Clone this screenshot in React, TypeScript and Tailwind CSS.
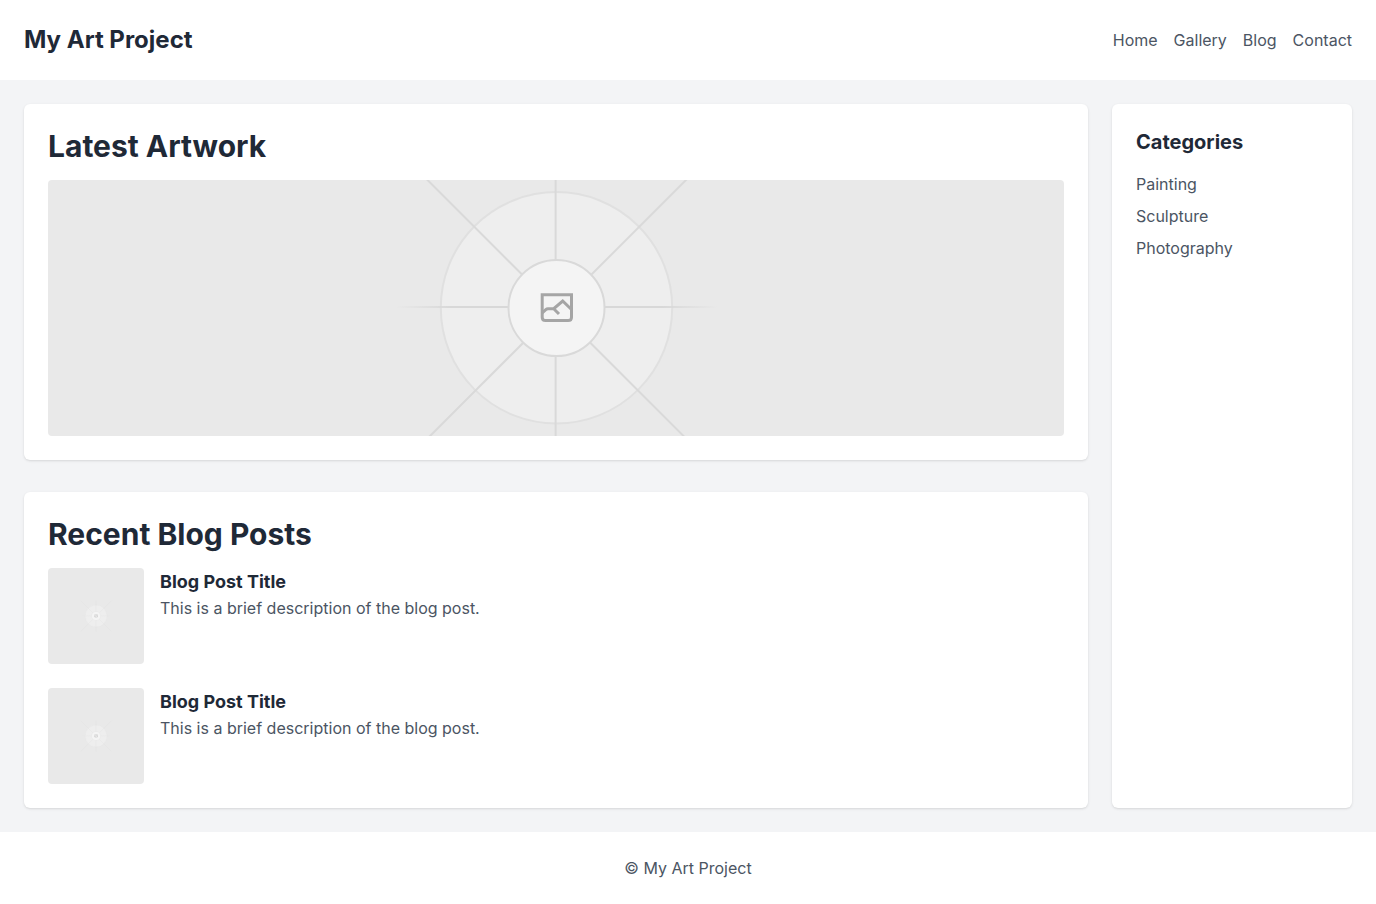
import { useId } from "react";

const navLinks = ["Home", "Gallery", "Blog", "Contact"];
const categories = ["Painting", "Sculpture", "Photography"];
const posts = [
  { id: 1, title: "Blog Post Title", text: "This is a brief description of the blog post." },
  { id: 2, title: "Blog Post Title", text: "This is a brief description of the blog post." },
];

function Placeholder({ label, className }: { label: string; className: string }) {
  const fade = useId();
  return (
    <svg
      role="img"
      aria-label={label}
      viewBox="-508 -508 1016 1016"
      preserveAspectRatio="xMidYMid slice"
      className={className}
    >
      <defs>
        <radialGradient id={fade} gradientUnits="userSpaceOnUse" cx="1" cy="0" r="212">
          <stop offset="0.5" stopColor="#d8d8d8" />
          <stop offset="0.76" stopColor="#d8d8d8" stopOpacity="0" />
        </radialGradient>
      </defs>
      <rect x="-508" y="-508" width="1016" height="1016" fill="#e9e9e9" />
      <circle cx="0.5" cy="-0.2" r="115.7" fill="#eeeeee" stroke="#e0e0e0" strokeWidth="2" />
      <path d="M-160 -1H164" stroke={`url(#${fade})`} strokeWidth="2" />
      <path d="M-0.4 -164V164M-164.5 -164L163.5 164M166 -164L-162 164" stroke="#d9d9d9" strokeWidth="2" />
      <circle cx="0.5" cy="0" r="48" fill="#f4f4f4" stroke="#d9d9d9" strokeWidth="2" />
      <g fill="none" stroke="#a5a5a5" strokeWidth="3">
        <path d="M-13.8 -13.3H15.5V9.2Q15.5 12.6 12.1 12.6H-10.4Q-13.8 12.6 -13.8 9.2Z" />
        <path d="M-13.8 5L-10.2 1.6Q-9.2 0.7 -8 0.7H-2.3L6.7 -7L15.5 1.5M-2.3 0.7L3 6" />
      </g>
    </svg>
  );
}

export default function App() {
  return (
    <div className="flex min-h-screen flex-col bg-gray-100 font-['Inter',sans-serif] text-[#4b5563]">
      <header className="flex items-center justify-between bg-white p-6">
        <div className="text-2xl font-bold text-[#1f2937]">My Art Project</div>
        <nav className="flex gap-4">
          {navLinks.map((name) => (
            <a key={name} href={`#${name.toLowerCase()}`}>
              {name}
            </a>
          ))}
        </nav>
      </header>

      <div className="flex flex-1 gap-6 p-6">
        <main className="flex min-w-0 flex-1 flex-col gap-8">
          <section className="rounded-md bg-white p-6 shadow-sm">
            <h1 className="mb-4 text-3xl font-bold text-[#1f2937]">Latest Artwork</h1>
            <Placeholder label="Latest artwork" className="h-64 w-full rounded" />
          </section>

          <section className="rounded-md bg-white p-6 shadow-sm">
            <h2 className="mb-4 text-3xl font-bold text-[#1f2937]">Recent Blog Posts</h2>
            <div className="flex flex-col gap-6">
              {posts.map((post) => (
                <article key={post.id} className="flex gap-4">
                  <Placeholder label="Blog post image" className="size-24 shrink-0 rounded" />
                  <div>
                    <h3 className="text-lg font-bold text-[#1f2937]">{post.title}</h3>
                    <p>{post.text}</p>
                  </div>
                </article>
              ))}
            </div>
          </section>
        </main>

        <aside className="w-60 shrink-0 rounded-md bg-white p-6 shadow-sm">
          <h2 className="mb-4 text-xl font-bold text-[#1f2937]">Categories</h2>
          <ul className="flex flex-col gap-2">
            {categories.map((name) => (
              <li key={name}>
                <a href={`#${name.toLowerCase()}`}>{name}</a>
              </li>
            ))}
          </ul>
        </aside>
      </div>

      <footer className="bg-white p-6 text-center">© My Art Project</footer>
    </div>
  );
}
